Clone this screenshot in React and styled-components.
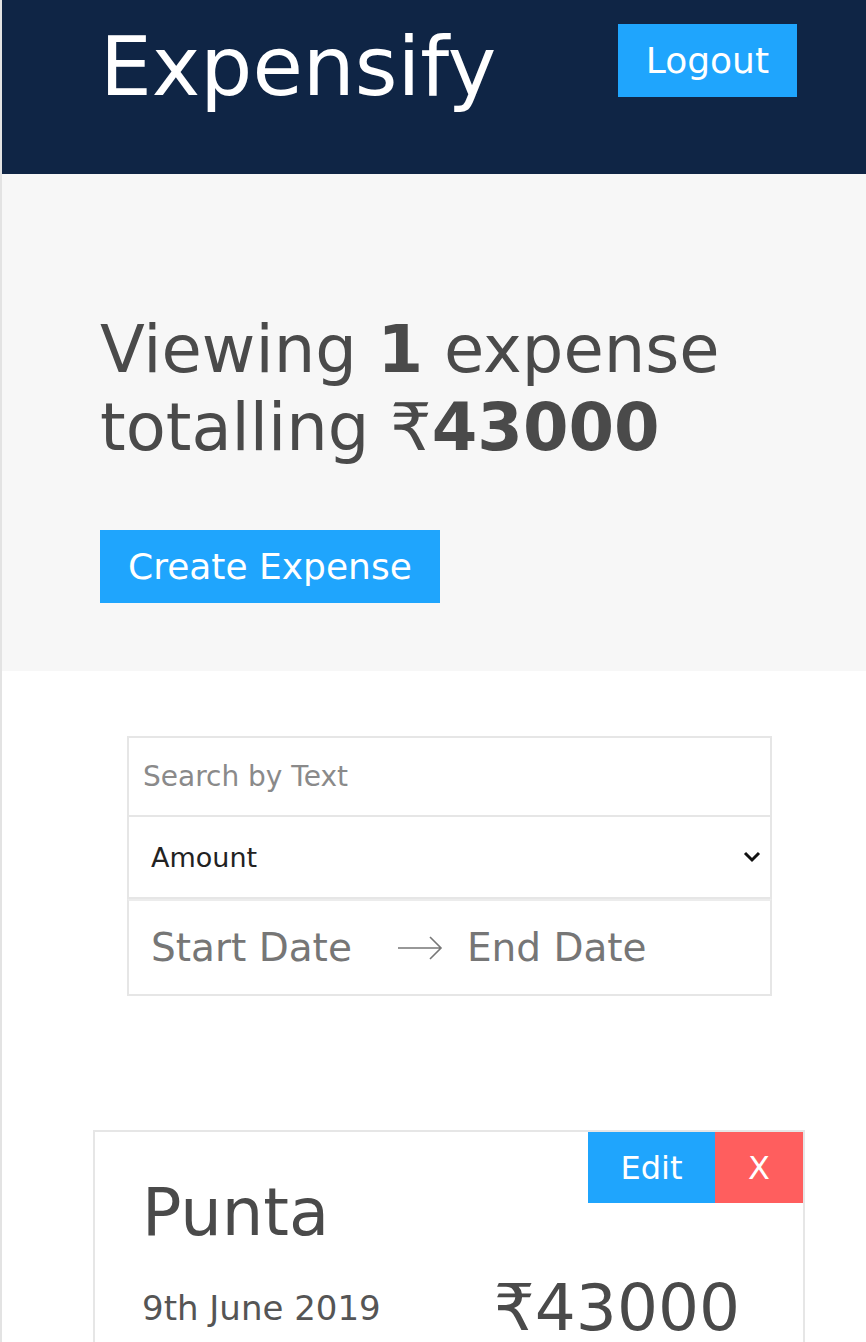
import React from "react"
import styled, { createGlobalStyle } from "styled-components"

const GlobalStyle = createGlobalStyle`
  html, body {
    margin: 0;
    padding: 0;
    background: #fff;
  }
  body {
    font-family: "DejaVu Sans", Verdana, sans-serif;
    color: #4a4a4a;
  }
  * {
    box-sizing: border-box;
  }
`

const Page = styled.div`
  border-left: 2px solid #e3e3e3;
  min-height: 1342px;
  overflow: hidden;
`

const Header = styled.header`
  background: #0f2545;
  height: 174px;
  display: flex;
  justify-content: space-between;
  align-items: flex-start;
  padding: 0 69px 0 98px;
`

const Title = styled.h1`
  margin: 19px 0 0;
  font-size: 82px;
  font-weight: normal;
  line-height: normal;
  color: #fff;
`

const Button = styled.button`
  display: flex;
  align-items: center;
  justify-content: center;
  height: ${(p) => p.$height || 73}px;
  width: ${(p) => (p.$width ? `${p.$width}px` : "auto")};
  padding: 0 ${(p) => (p.$width ? 0 : 28)}px;
  margin-top: ${(p) => p.$top || 0}px;
  background: ${(p) => (p.$danger ? "#ff5e5e" : "#1fa5fd")};
  color: #fff;
  border: none;
  border-radius: 0;
  font-family: inherit;
  font-size: ${(p) => p.$size || 36}px;
  cursor: pointer;
`

const Summary = styled.section`
  background: #f7f7f7;
  padding: 136px 98px 68px;
`

const SummaryTitle = styled.h2`
  margin: 0 0 64px;
  font-size: 65.5px;
  line-height: 78px;
  font-weight: normal;
  color: #4a4a4a;

  strong {
    font-weight: bold;
  }
`

const Filters = styled.div`
  width: 645px;
  margin: 65px 0 0 125px;
`

const SearchInput = styled.input`
  display: block;
  width: 100%;
  height: 81px;
  border: 2px solid #e6e6e6;
  padding: 0 14px;
  font-family: inherit;
  font-size: 28px;
  color: #333;
  outline: none;

  &::placeholder {
    color: #8a8a8a;
  }
`

const SelectBox = styled.div`
  display: flex;
  align-items: center;
  height: 82px;
  border: 2px solid #e6e6e6;
  border-top: none;
  padding-right: 8px;
`

const Select = styled.select`
  flex: 1;
  height: 100%;
  appearance: none;
  border: none;
  background: transparent;
  padding: 0 0 0 22px;
  font-family: inherit;
  font-size: 27px;
  color: #222;
  outline: none;
`

const DateBox = styled.div`
  display: flex;
  align-items: center;
  height: 97px;
  border: 2px solid #e6e6e6;
  border-top: 2px solid #ececec;
  padding-left: 22px;
  font-size: 39px;
  color: #767676;
`

const Arrow = styled.svg`
  margin: 0 24px 0 45px;
  flex: none;
`

const Card = styled.div`
  position: relative;
  width: 712px;
  margin: 134px 0 0 91px;
  border: 2px solid #e6e6e6;
  padding: 42px 63px 40px 47px;
`

const Actions = styled.div`
  position: absolute;
  top: 0;
  right: 0;
  display: flex;
`

const ExpenseName = styled.h3`
  margin: 0;
  font-size: 65.5px;
  font-weight: normal;
  line-height: normal;
  color: #4a4a4a;
`

const ExpenseRow = styled.div`
  display: flex;
  justify-content: space-between;
  align-items: center;
  margin-top: 20px;
`

const ExpenseDate = styled.span`
  font-size: 34px;
  color: #555;
`

const ExpenseAmount = styled.span`
  font-size: 64.5px;
  color: #4a4a4a;
`

const App = () => {
  return (
    <Page>
      <GlobalStyle />
      <Header>
        <Title>Expensify</Title>
        <Button $top={24}>Logout</Button>
      </Header>

      <Summary>
        <SummaryTitle>
          Viewing <strong>1</strong> expense totalling ₹<strong>43000</strong>
        </SummaryTitle>
        <Button>Create Expense</Button>
      </Summary>

      <Filters>
        <SearchInput type="text" placeholder="Search by Text" />
        <SelectBox>
          <Select defaultValue="amount">
            <option value="date">Date</option>
            <option value="amount">Amount</option>
          </Select>
          <svg width="20" height="12" viewBox="0 0 20 12">
            <path d="M3 2 L10 9 L17 2" fill="none" stroke="#111" strokeWidth="3" />
          </svg>
        </SelectBox>
        <DateBox>
          <span>Start Date</span>
          <Arrow width="46" height="28" viewBox="0 0 46 28">
            <path d="M1 14 H44 M33 3 L44 14 L33 25" fill="none" stroke="#777" strokeWidth="1.6" />
          </Arrow>
          <span>End Date</span>
        </DateBox>
      </Filters>

      <Card>
        <Actions>
          <Button $width={127} $height={71} $size={32}>Edit</Button>
          <Button $width={88} $height={71} $size={32} $danger>X</Button>
        </Actions>
        <ExpenseName>Punta</ExpenseName>
        <ExpenseRow>
          <ExpenseDate>9th June 2019</ExpenseDate>
          <ExpenseAmount>₹43000</ExpenseAmount>
        </ExpenseRow>
      </Card>
    </Page>
  )
}

export default App
